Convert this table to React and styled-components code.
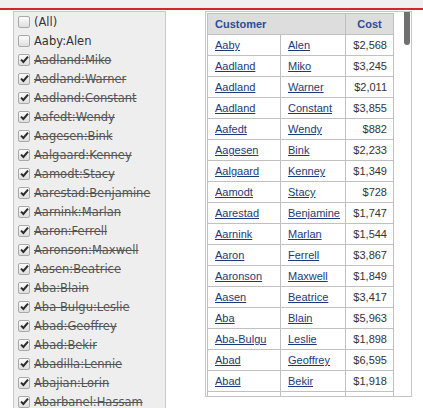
import React from "react";
import styled, { createGlobalStyle } from "styled-components";

const Global = createGlobalStyle`
  html, body { margin: 0; padding: 0; overflow: hidden; background: #fff; }
  body { font-family: "DejaVu Sans", Verdana, sans-serif; }
`;

const TopBar = styled.div`
  height: 8px;
  background: #f0f0f0;
  border-bottom: 2px solid #d8232a;
`;

const Main = styled.div`
  display: flex;
  align-items: flex-start;
  padding: 1px 0 0 13px;
  gap: 39px;
`;

const FilterPanel = styled.div`
  width: 151px;
  height: 420px;
  background: #eeeeee;
  border: 1px solid #c9c9c9;
  overflow: hidden;
`;

const Item = styled.label`
  display: flex;
  align-items: center;
  height: 19px;
  padding-left: 4px;
  gap: 4px;
  font-size: 11.5px;
  color: ${(p) => (p.$checked ? "#555" : "#333")};
  text-decoration: ${(p) => (p.$checked ? "line-through" : "none")};
  white-space: nowrap;
`;

const Box = styled.span`
  flex: none;
  width: 10px;
  height: 10px;
  border: 1px solid #a9a9a9;
  border-radius: 2px;
  background: linear-gradient(#fcfcfc, #dedede);
  display: flex;
  align-items: center;
  justify-content: center;
`;

const TableBox = styled.div`
  position: relative;
  width: 203px;
  height: 382px;
  border: 1px solid #c6c6c6;
  padding: 1px;
  box-sizing: content-box;
  overflow: hidden;
  background: #fff;
`;

const Thumb = styled.div`
  position: absolute;
  top: -2px;
  right: 1px;
  width: 6px;
  height: 35px;
  border-radius: 3px;
  background: #707070;
`;

const Table = styled.table`
  border-collapse: collapse;
  width: 187px;
  font-family: "Liberation Sans", Arial, sans-serif;
  font-size: 11px;
  border: 1px solid #c0c0c0;
  table-layout: fixed;
`;

const Th = styled.th`
  background: #dddddd;
  color: #2a4c9c;
  font-weight: bold;
  height: 20px;
  padding: 0 0 0 7px;
  text-align: ${(p) => p.$align || "left"};
  border: 1px solid #c0c0c0;
  ${(p) => p.$align === "center" && "padding: 0;"}
`;

const Td = styled.td`
  height: 20px;
  padding: 0 6px 0 7px;
  border: 1px solid #c0c0c0;
  text-align: ${(p) => p.$align || "left"};
  color: #333;
  white-space: nowrap;
  overflow: hidden;
`;

const Link = styled.a`
  color: #1d3a78;
  text-decoration: underline;
`;

function Check({ checked }) {
  return (
    <Box>
      {checked && (
        <svg width="9" height="9" viewBox="0 0 9 9">
          <path d="M1 4.6 L3.4 7 L8 1.6" fill="none" stroke="#2b2b2b" strokeWidth="2" />
        </svg>
      )}
    </Box>
  );
}

const rows = [
  ["Aaby", "Alen", "$2,568"],
  ["Aadland", "Miko", "$3,245"],
  ["Aadland", "Warner", "$2,011"],
  ["Aadland", "Constant", "$3,855"],
  ["Aafedt", "Wendy", "$882"],
  ["Aagesen", "Bink", "$2,233"],
  ["Aalgaard", "Kenney", "$1,349"],
  ["Aamodt", "Stacy", "$728"],
  ["Aarestad", "Benjamine", "$1,747"],
  ["Aarnink", "Marlan", "$1,544"],
  ["Aaron", "Ferrell", "$3,867"],
  ["Aaronson", "Maxwell", "$1,849"],
  ["Aasen", "Beatrice", "$3,417"],
  ["Aba", "Blain", "$5,963"],
  ["Aba-Bulgu", "Leslie", "$1,898"],
  ["Abad", "Geoffrey", "$6,595"],
  ["Abad", "Bekir", "$1,918"],
  ["Abadilla", "Lennie", "$2,104"],
];

const items = [
  ["(All)", false],
  ["Aaby:Alen", false],
  ["Aadland:Miko", true],
  ["Aadland:Warner", true],
  ["Aadland:Constant", true],
  ["Aafedt:Wendy", true],
  ["Aagesen:Bink", true],
  ["Aalgaard:Kenney", true],
  ["Aamodt:Stacy", true],
  ["Aarestad:Benjamine", true],
  ["Aarnink:Marlan", true],
  ["Aaron:Ferrell", true],
  ["Aaronson:Maxwell", true],
  ["Aasen:Beatrice", true],
  ["Aba:Blain", true],
  ["Aba-Bulgu:Leslie", true],
  ["Abad:Geoffrey", true],
  ["Abad:Bekir", true],
  ["Abadilla:Lennie", true],
  ["Abajian:Lorin", true],
  ["Abarbanel:Hassam", true],
  ["Abate:Ruth", true],
];

export default function App() {
  return (
    <>
      <Global />
      <TopBar />
      <Main>
        <FilterPanel>
          {items.map(([t, c]) => (
            <Item key={t} $checked={c}>
              <Check checked={c} />
              <span>{t}</span>
            </Item>
          ))}
        </FilterPanel>
        <TableBox>
          <Table>
            <colgroup>
              <col style={{ width: 73 }} />
              <col style={{ width: 65 }} />
              <col style={{ width: 48 }} />
            </colgroup>
            <thead>
              <tr>
                <Th colSpan={2}>Customer</Th>
                <Th $align="center">Cost</Th>
              </tr>
            </thead>
            <tbody>
              {rows.map(([a, b, c], i) => (
                <tr key={i}>
                  <Td><Link>{a}</Link></Td>
                  <Td><Link>{b}</Link></Td>
                  <Td $align="right">{c}</Td>
                </tr>
              ))}
            </tbody>
          </Table>
          <Thumb />
        </TableBox>
      </Main>
    </>
  );
}
